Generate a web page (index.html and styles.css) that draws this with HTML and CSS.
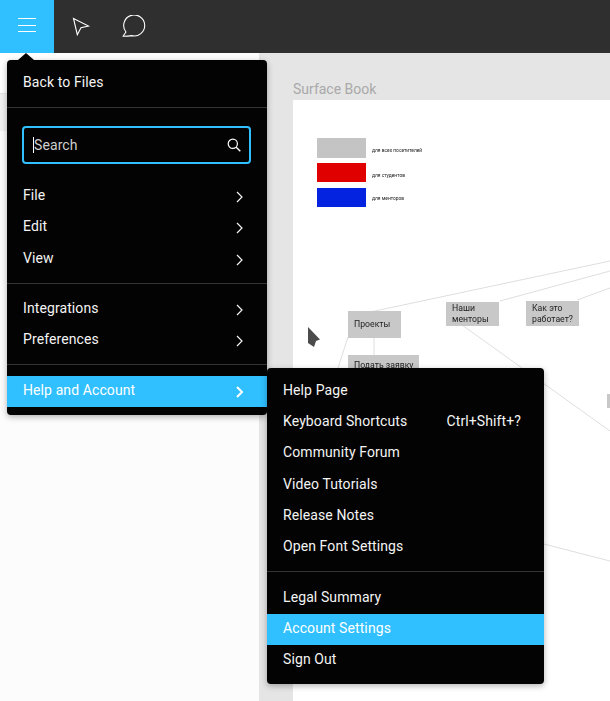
FILE: index.html
```html
<!DOCTYPE html>
<html lang="en">
<head>
  <meta charset="UTF-8">
  <title>Surface Book</title>
  <link rel="stylesheet" href="styles.css">
</head>
<body>
  <header class="topbar">
    <button class="menu-btn" aria-label="Menu">
      <svg width="20" height="17" viewBox="0 0 20 17"><path d="M1 .5h18M1 7.5h18M1 13.5h18" fill="none" stroke="#fff" stroke-width="1"/></svg>
    </button>
    <div class="tool">
      <svg width="20" height="20" viewBox="0 0 20 20"><path d="M2.5 1.5 L17.5 9 L10 10.8 L6.3 17.7 Z" fill="none" stroke="#fff" stroke-width="1.1" stroke-linejoin="miter"/></svg>
    </div>
    <div class="tool">
      <svg width="26" height="24" viewBox="0 0 26 24"><path d="M2 21.3 L5 17 A10.5 10.5 0 1 1 10.5 20.6 C8 21.2 5 21.3 2 21.3 Z" fill="none" stroke="#fff" stroke-width="1.1" stroke-linejoin="round"/></svg>
    </div>
  </header>

  <div class="workspace">
    <aside class="sidebar">
      <div class="sidebar-band"></div>
    </aside>
    <section class="canvas">
      <div class="frame-label">Surface Book</div>
      <div class="frame">
        <svg class="links" width="317" height="601" viewBox="293 100 317 601">
          <path d="M370 312 L610 261 M500 301 L610 271 M577 300 L610 288 M462 325 L610 431 M540 543 L610 561 M348 337 L338 368 M374 338 L374 355" fill="none" stroke="#dedede" stroke-width="1"/>
        </svg>
        <div class="swatch swatch-grey"></div>
        <div class="swatch swatch-red"></div>
        <div class="swatch swatch-blue"></div>
        <span class="legend legend-grey">для всех посетителей</span>
        <span class="legend legend-red">для студентов</span>
        <span class="legend legend-blue">для менторов</span>
        <div class="node node-projects">Проекты</div>
        <div class="node node-mentors">Наши<br>менторы</div>
        <div class="node node-how">Как это<br>работает?</div>
        <div class="node node-apply">Подать заявку</div>
        <div class="node node-edge"></div>
      </div>
      <svg class="pointer" width="14" height="22" viewBox="0 0 14 22"><path d="M1 1 L13 13.5 L9 15 L7 21 L1 17 Z" fill="#4b4b4b"/></svg>
    </section>
  </div>

  <nav class="menu main-menu">
    <div class="menu-tip"></div>
    <div class="back-row">Back to Files</div>
    <div class="search-wrap">
      <div class="search">
        <span class="caret"></span>
        <span class="search-text">Search</span>
        <svg width="14" height="14" viewBox="0 0 14 14"><circle cx="5.8" cy="5.8" r="4.6" fill="none" stroke="#fff" stroke-width="1.2"/><path d="M9.2 9.2 L13.3 13.3" stroke="#fff" stroke-width="1.4"/></svg>
      </div>
    </div>
    <div class="group group-file">
      <div class="item">File<svg class="chev" width="7" height="12" viewBox="0 0 7 12"><path d="M1 1 L6 6 L1 11" /></svg></div>
      <div class="item">Edit<svg class="chev" width="7" height="12" viewBox="0 0 7 12"><path d="M1 1 L6 6 L1 11" /></svg></div>
      <div class="item">View<svg class="chev" width="7" height="12" viewBox="0 0 7 12"><path d="M1 1 L6 6 L1 11" /></svg></div>
    </div>
    <div class="group group-prefs">
      <div class="item">Integrations<svg class="chev" width="7" height="12" viewBox="0 0 7 12"><path d="M1 1 L6 6 L1 11" /></svg></div>
      <div class="item">Preferences<svg class="chev" width="7" height="12" viewBox="0 0 7 12"><path d="M1 1 L6 6 L1 11" /></svg></div>
    </div>
    <div class="group group-help">
      <div class="item active">Help and Account<svg class="chev chev-bold" width="7" height="12" viewBox="0 0 7 12"><path d="M1 1 L6 6 L1 11" /></svg></div>
    </div>
  </nav>

  <nav class="menu sub-menu">
    <div class="group group-links">
      <div class="item">Help Page</div>
      <div class="item">Keyboard Shortcuts<span class="shortcut">Ctrl+Shift+?</span></div>
      <div class="item">Community Forum</div>
      <div class="item">Video Tutorials</div>
      <div class="item">Release Notes</div>
      <div class="item">Open Font Settings</div>
    </div>
    <div class="group group-account">
      <div class="item">Legal Summary</div>
      <div class="item active">Account Settings</div>
      <div class="item">Sign Out</div>
    </div>
  </nav>
</body>
</html>
```

FILE: styles.css
```css
* {
  box-sizing: border-box;
}
html, body {
  margin: 0;
  height: 701px;
  overflow: hidden;
}
body {
  font-family: 'Roboto', 'Liberation Sans', sans-serif;
  font-size: 14px;
  display: flex;
  flex-direction: column;
  background: #fcfcfc;
}

/* top bar */
.topbar {
  height: 53px;
  flex: none;
  display: flex;
  align-items: center;
  background: #2f2f2f;
}
.menu-btn {
  width: 54px;
  height: 53px;
  border: 0;
  padding: 0 0 1px;
  background: #30bfff;
  display: flex;
  align-items: center;
  justify-content: center;
}
.tool {
  display: flex;
  align-items: center;
  justify-content: center;
  width: 20px;
  height: 24px;
  margin-left: 17px;
}
.tool + .tool {
  width: 26px;
  margin-left: 30px;
}

/* page under the bar */
.workspace {
  flex: 1;
  display: flex;
  min-height: 0;
}
.sidebar {
  width: 259px;
  flex: none;
  padding-top: 40px;
  background: linear-gradient(#fff 0, #fff 40px, #fcfcfc 40px);
}
.sidebar-band {
  height: 38px;
  background: #f1f1f1;
  border-top: 1px solid #e6e6e6;
}
.canvas {
  flex: 1;
  position: relative;
  padding: 26px 0 0 34px;
  background: #e5e5e5;
  display: flex;
  flex-direction: column;
  min-width: 0;
}
.frame-label {
  height: 21px;
  line-height: 20px;
  color: #a9a9a9;
  font-size: 14px;
}
.frame {
  flex: 1;
  position: relative;
  background: #fff;
  filter: blur(0.35px);
}
.links {
  position: absolute;
  left: 0;
  top: 0;
}

/* things on the frame, coordinates relative to it */
.swatch {
  position: absolute;
  left: 24px;
  width: 49px;
  height: 19px;
}
.swatch-grey {
  top: 38px;
  height: 20px;
  background: #c4c4c4;
}
.swatch-red {
  top: 63px;
  background: #e00000;
}
.swatch-blue {
  top: 88px;
  background: #0423e0;
}
.legend {
  position: absolute;
  left: 79px;
  font-size: 4.9px;
  line-height: 6px;
  color: #222;
  white-space: nowrap;
}
.legend-grey {
  top: 47px;
}
.legend-red {
  top: 72px;
}
.legend-blue {
  top: 95px;
}
.node {
  position: absolute;
  background: #c8c8c8;
  color: #1e1e1e;
  font-size: 8.7px;
  line-height: 11px;
  padding-left: 6px;
  white-space: nowrap;
  display: flex;
  align-items: center;
}
.node-projects {
  left: 55px;
  top: 211px;
  width: 53px;
  height: 27px;
}
.node-mentors {
  left: 153px;
  top: 202px;
  width: 53px;
  height: 24px;
}
.node-how {
  left: 233px;
  top: 201px;
  width: 53px;
  height: 25px;
}
.node-apply {
  left: 55px;
  top: 255px;
  width: 71px;
  height: 30px;
  align-items: flex-start;
  padding-top: 5px;
}
.node-edge {
  left: 314px;
  top: 294px;
  width: 10px;
  height: 14px;
  padding: 0;
}
.pointer {
  position: absolute;
  left: 48px;
  top: 273px;
}

/* menus */
.menu {
  position: absolute;
  width: 260px;
  background: #030303;
  color: #f4f4f4;
  border-radius: 4px;
  box-shadow: 0 2px 6px rgba(0, 0, 0, 0.3);
  letter-spacing: 0.1px;
}
.main-menu {
  left: 7px;
  top: 60px;
}
.sub-menu {
  left: 267px;
  top: 368px;
  width: 277px;
}
.menu-tip {
  position: absolute;
  left: 11px;
  top: -7px;
  width: 0;
  height: 0;
  border-left: 8px solid transparent;
  border-right: 8px solid transparent;
  border-bottom: 7px solid #030303;
}
.back-row {
  height: 48px;
  padding: 0 16px 3px;
  display: flex;
  align-items: center;
  border-bottom: 1px solid #333;
}
.search-wrap {
  padding: 18px 16px 17px 15px;
}
.search {
  height: 38px;
  border: 2px solid #30bfff;
  border-radius: 4px;
  display: flex;
  align-items: center;
  padding: 0 8px 0 9px;
}
.caret {
  width: 1px;
  height: 16px;
  background: #fff;
}
.search-text {
  flex: 1;
  color: #cfcfcf;
}
.group {
  border-bottom: 1px solid #333;
  padding-bottom: 8px;
}
.group:last-child {
  border-bottom: 0;
}
.group-file {
  padding-top: 0.15px;
}
.group-prefs {
  padding-top: 9.85px;
}
.group-help {
  padding-top: 11px;
}
.group-links {
  padding-top: 8px;
}
.group-account {
  padding-top: 10.8px;
}
.item {
  height: 31.2px;
  padding: 0 24px 3px 16px;
  display: flex;
  align-items: center;
  justify-content: space-between;
  white-space: nowrap;
}
.item.active {
  background: #30bfff;
  color: #fff;
}
.shortcut {
  margin-right: -1px;
}
.chev {
  margin-top: 4px;
  fill: none;
  stroke: #f4f4f4;
  stroke-width: 1.2;
}
.chev-bold {
  stroke: #fff;
  stroke-width: 2;
}
```
